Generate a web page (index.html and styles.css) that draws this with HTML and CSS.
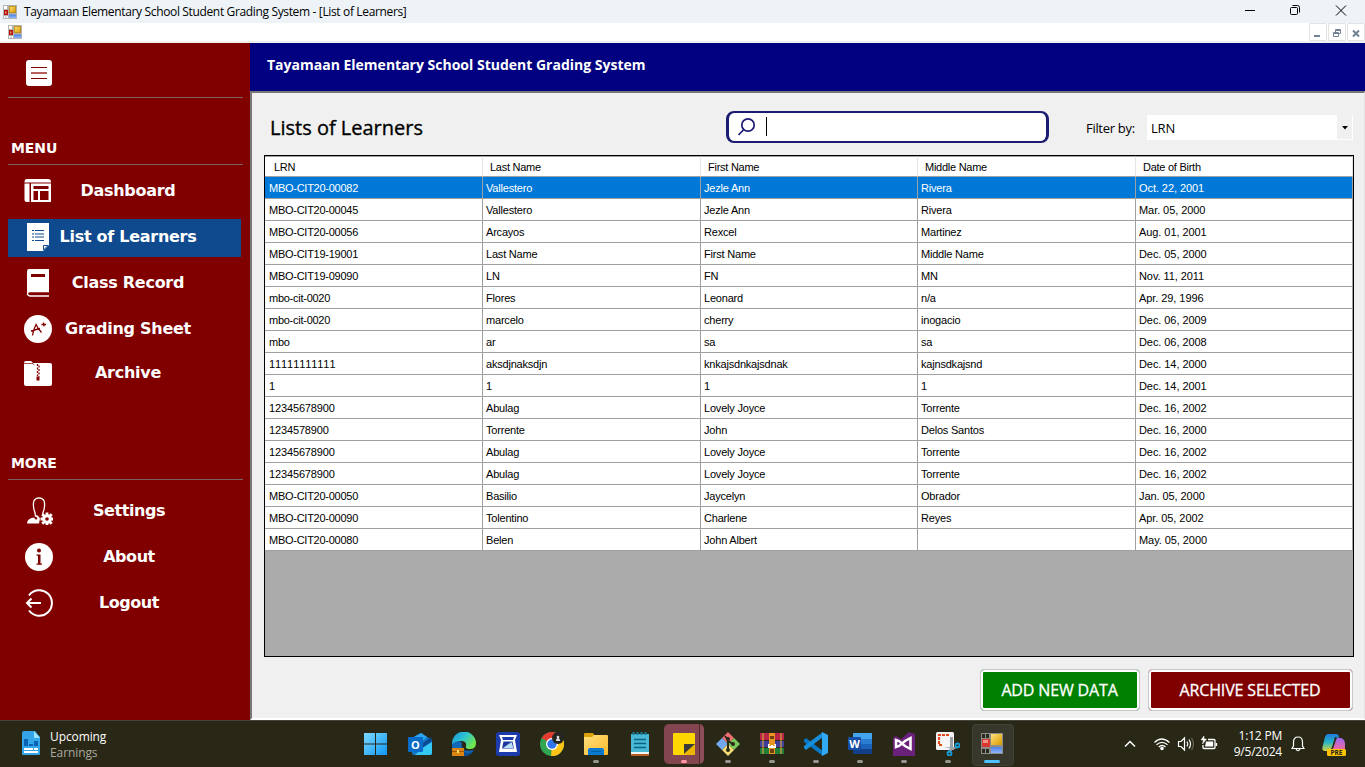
FILE: index.html
```html
<!DOCTYPE html>
<html lang="en">
<head>
<meta charset="utf-8">
<title>Tayamaan Elementary School Student Grading System</title>
<link rel="stylesheet" href="styles.css">
</head>
<body>
<svg class="defs" width="0" height="0">
  <defs>
    <linearGradient id="gold" x1="0" y1="0" x2="1" y2="1"><stop offset="0" stop-color="#ffe27a"/><stop offset="1" stop-color="#d89a00"/></linearGradient>
    <linearGradient id="blue" x1="0" y1="0" x2="0" y2="1"><stop offset="0" stop-color="#4a7ee0"/><stop offset="1" stop-color="#8fb6ff"/></linearGradient>
    <linearGradient id="win" gradientUnits="userSpaceOnUse" x1="0" y1="0" x2="24" y2="24"><stop offset="0" stop-color="#7fdcff"/><stop offset="1" stop-color="#0a93f5"/></linearGradient>
    <linearGradient id="edge" x1="0" y1="0" x2="1" y2=".6"><stop offset="0" stop-color="#1593d8"/><stop offset=".5" stop-color="#2cc3d2"/><stop offset="1" stop-color="#72e84c"/></linearGradient>
    <linearGradient id="folder" x1="0" y1="0" x2="1" y2="1"><stop offset="0" stop-color="#ffdf7c"/><stop offset="1" stop-color="#fbb92c"/></linearGradient>
    <linearGradient id="pilot" x1="0" y1="0" x2="0" y2="1"><stop offset="0" stop-color="#1f7de0"/><stop offset=".5" stop-color="#27b6c4"/><stop offset="1" stop-color="#d8d23a"/></linearGradient>
    <linearGradient id="pilot2" x1="0" y1="0" x2="0" y2="1"><stop offset="0" stop-color="#a068f0"/><stop offset="1" stop-color="#f0689a"/></linearGradient>
    <g id="form">
      <path fill="#b4b4b4" d="M0 0h14v14H0z"/><path fill="#fff" d="M1 1h3v3H1zM1 11h1.500v2H1zM3.500 11H5v2H3.500z"/>
      <path fill="#b81408" d="M1 5h4v5H1z"/><path fill="#f08a80" d="M2 6.500h1.500v2H2z"/>
      <path fill="url(#gold)" stroke="#b88200" stroke-width=".8" d="M6.400 1.400h6.200v6.200H6.400z"/><path fill="url(#blue)" d="M6 9.500h7V13H6z"/>
    </g>
  </defs>
</svg>

<header class="titlebar">
  <svg class="app-icon" width="14" height="14"><use href="#form"/></svg>
  <span class="window-title">Tayamaan Elementary School Student Grading System - [List of Learners]</span>
  <svg class="window-controls" width="120" height="23" fill="none" stroke="#000">
    <path d="M0 10.500h10M45.500 8.500a1 1 0 0 1 1-1h5a1 1 0 0 1 1 1v5a1 1 0 0 1-1 1h-5a1 1 0 0 1-1-1zM47.500 5.500h5q2 0 2 2v5M91 5.500l10 10M101 5.500l-10 10"/>
  </svg>
</header>
<div class="menustrip">
  <svg class="app-icon" width="14" height="14"><use href="#form"/></svg>
  <div class="mdi-controls">
    <span class="mdi-button"><svg width="16" height="16"><path d="M4 12h6" stroke="#718295" stroke-width="2"/></svg></span>
    <span class="mdi-button"><svg width="16" height="16" fill="none" stroke="#718295"><path d="M4.500 8.500h5v4h-5zM4 9.500h6M6.500 8V5.500h5v4H10M6 6.500h6"/></svg></span>
    <span class="mdi-button"><svg width="16" height="16" stroke="#718295" stroke-width="2"><path d="M5 6.500l6 6M11 6.500l-6 6"/></svg></span>
  </div>
</div>

<div class="workspace">
  <nav class="sidebar">
    <div class="burger"><svg width="26" height="26"><rect width="26" height="26" rx="3" fill="#fff"/><path d="M5 7.500h16M5 18.500h16" stroke="#800000"/><path d="M5 13h16" stroke="#b66060" stroke-width="2"/></svg></div>
    <h2 class="group-title">MENU</h2>
    <ul class="nav-list">
      <li class="nav-item"><svg width="28" height="28" fill="#fff"><path d="M3 2h21q3 0 3 3v.5H.5V5q0-3 2.500-3zM.5 6.500h5V25H3q-2.500 0-2.500-2.500z"/><path fill-rule="evenodd" d="M7 6.500h20V25H7zM9.500 9v3h15V9zM9.500 14v9h4.500v-9zM16 14v9h8.500v-9z"/></svg><span>Dashboard</span></li>
      <li class="nav-item active"><svg width="28" height="28"><path fill="#fff" d="M3 0h22v22l-6 6H3z"/><path d="M8 7.500h2M11 7.500h9M8 17.500h2M11 17.500h9" stroke="#104a8e"/><path d="M8 11h2M11 11h9M8 14h2M11 14h9" stroke="#5f86b4" stroke-width="1.600"/><path fill="#fff" stroke="#104a8e" d="M19.500 27v-4.500H24z"/></svg><span>List of Learners</span></li>
      <li class="nav-item"><svg width="28" height="28"><path fill="#fff" d="M5 0h20v22H6q-2 0-3 1.500V3q0-3 2-3z"/><path d="M7 6.500h14" stroke="#800000" stroke-width="3"/><path d="M25 22.500H6q-2.500 0-2.500 2t2.500 2.500h19" stroke="#fff" stroke-width="1.300" fill="none"/></svg><span>Class Record</span></li>
      <li class="nav-item"><svg width="28" height="28"><circle cx="14" cy="14" r="14" fill="#fff"/><path d="M8.500 20.500q1-6 3.500-11 2 4 5.500 8M7 16l9-2.500M17.500 9.500h4.500M19.500 7.500l.5 4" fill="none" stroke="#800000" stroke-width="1.300"/></svg><span>Grading Sheet</span></li>
      <li class="nav-item last"><svg width="28" height="28"><path fill="#fff" d="M0 4q0-2 2-2h5l2 2h17q2 0 2 2v19q0 2-2 2H2q-2 0-2-2z"/><path d="M0 4.500h9l1 1.500" stroke="#800000" fill="none" stroke-width=".7"/><path d="M13.500 5v12M15 6.500v11" stroke="#800000" stroke-dasharray="2 1.500" stroke-width="1.300"/><path d="M12.500 17.500h3v4h-3z" fill="#800000"/></svg><span>Archive</span></li>
    </ul>
    <h2 class="group-title more">MORE</h2>
    <ul class="nav-list more-list">
      <li class="nav-item"><svg width="28" height="28"><path d="M10.500 19.500q0-3-1.500-7Q6.500 1 14 .8 21.500 1 19 12.500q-1.500 4-1.500 6" fill="none" stroke="#fff" stroke-width="1.300"/><path fill="#fff" d="M2 26.500q0-5 7-6l2 2.500 1.500-2-2.500-2 2-1 2 2 1 1.500-1 5z"/><path d="M22 15.500v13M15.500 22h13M17.300 17.300l9.400 9.400M26.700 17.300l-9.400 9.400" stroke="#fff" stroke-width="2.800"/><circle cx="22" cy="22" r="4.800" fill="#fff"/><circle cx="22" cy="22" r="1.800" fill="#800000"/></svg><span>Settings</span></li>
      <li class="nav-item"><svg width="28" height="28"><circle cx="14" cy="14" r="14" fill="#fff"/><circle cx="14" cy="7.500" r="2" fill="#800000"/><path fill="#800000" d="M11.500 11.500h4V20.500H17v1.200h-5.500v-1.200H13v-7.700h-1.500z"/></svg><span>About</span></li>
      <li class="nav-item"><svg width="28" height="28" fill="none" stroke="#fff"><path d="M4 6.500A12.700 12.700 0 1 1 4 21.500" stroke-width="2"/><path d="M16 14H2M6.500 9.500L2 14l4.500 4.500" stroke-width="2"/></svg><span>Logout</span></li>
    </ul>
  </nav>

  <main class="content">
    <div class="banner">Tayamaan Elementary School Student Grading System</div>
    <section class="page">
      <div class="toolbar">
        <h1 class="page-title">Lists of Learners</h1>
        <div class="search"><svg width="40" height="28" fill="none" stroke="#1b1b72" stroke-width="1.700"><ellipse cx="19" cy="12" rx="6.200" ry="6.200"/><path d="M14.800 16.500L9.500 22"/></svg><i class="caret"></i></div>
        <label class="filter-label">Filter by:</label>
        <div class="select"><span>LRN</span><b class="drop"><svg width="15" height="24"><path d="M5 11h6l-3 3.500z"/></svg></b></div>
      </div>
      <div class="grid">
        <table>
          <colgroup><col class="wide"><col class="wide"><col class="narrow"><col class="wide"><col class="narrow"></colgroup>
          <thead><tr><th>LRN</th><th>Last Name</th><th>First Name</th><th>Middle Name</th><th>Date of Birth</th></tr></thead>
          <tbody>
            <tr class="selected"><td>MBO-CIT20-00082</td><td>Vallestero</td><td>Jezle Ann</td><td>Rivera</td><td>Oct. 22, 2001</td></tr>
            <tr><td>MBO-CIT20-00045</td><td>Vallestero</td><td>Jezle Ann</td><td>Rivera</td><td>Mar. 05, 2000</td></tr>
            <tr><td>MBO-CIT20-00056</td><td>Arcayos</td><td>Rexcel</td><td>Martinez</td><td>Aug. 01, 2001</td></tr>
            <tr><td>MBO-CIT19-19001</td><td>Last Name</td><td>First Name</td><td>Middle Name</td><td>Dec. 05, 2000</td></tr>
            <tr><td>MBO-CIT19-09090</td><td>LN</td><td>FN</td><td>MN</td><td>Nov. 11, 2011</td></tr>
            <tr><td>mbo-cit-0020</td><td>Flores</td><td>Leonard</td><td>n/a</td><td>Apr. 29, 1996</td></tr>
            <tr><td>mbo-cit-0020</td><td>marcelo</td><td>cherry</td><td>inogacio</td><td>Dec. 06, 2009</td></tr>
            <tr><td>mbo</td><td>ar</td><td>sa</td><td>sa</td><td>Dec. 06, 2008</td></tr>
            <tr><td class="ones">11111111111</td><td>aksdjnaksdjn</td><td>knkajsdnkajsdnak</td><td>kajnsdkajsnd</td><td>Dec. 14, 2000</td></tr>
            <tr><td>1</td><td>1</td><td>1</td><td>1</td><td>Dec. 14, 2001</td></tr>
            <tr><td class="number">12345678900</td><td>Abulag</td><td>Lovely Joyce</td><td>Torrente</td><td>Dec. 16, 2002</td></tr>
            <tr><td class="number">1234578900</td><td>Torrente</td><td>John</td><td>Delos Santos</td><td>Dec. 16, 2000</td></tr>
            <tr><td class="number">12345678900</td><td>Abulag</td><td>Lovely Joyce</td><td>Torrente</td><td>Dec. 16, 2002</td></tr>
            <tr><td class="number">12345678900</td><td>Abulag</td><td>Lovely Joyce</td><td>Torrente</td><td>Dec. 16, 2002</td></tr>
            <tr><td>MBO-CIT20-00050</td><td>Basilio</td><td>Jaycelyn</td><td>Obrador</td><td>Jan. 05, 2000</td></tr>
            <tr><td>MBO-CIT20-00090</td><td>Tolentino</td><td>Charlene</td><td>Reyes</td><td>Apr. 05, 2002</td></tr>
            <tr><td>MBO-CIT20-00080</td><td>Belen</td><td>John Albert</td><td></td><td>May. 05, 2000</td></tr>
          </tbody>
        </table>
      </div>
      <div class="actions">
        <button class="action add">ADD NEW DATA</button>
        <button class="action archive">ARCHIVE SELECTED</button>
      </div>
    </section>
  </main>
</div>

<footer class="taskbar">
  <div class="widget">
    <svg width="18" height="24"><path fill="#35a5ea" d="M2 0h11l5 6v17q0 1-1 1H1q-1 0-1-1V2q0-2 2-2z"/><path fill="#9be4ff" d="M12 0l6 7h-6z"/><path fill="#0b62b4" d="M2 8h4v7H2zM7 13h4v2H7zM12 10h4v5h-4z"/><path fill="#fff" d="M2 17h9v2H2zM12 17h4v2h-4zM2 20h14v2H2z"/></svg>
    <div class="widget-text"><span>Upcoming</span><span class="muted">Earnings</span></div>
  </div>
  <div class="apps">
    <div class="app"><svg width="24" height="24" fill="url(#win)"><path d="M0 1h11v10.500H0zM12 1h11v10.500H12zM0 12.500h11V23H0zM12 12.500h11V23H12z"/></svg></div>
    <div class="app"><svg width="24" height="24"><path fill="#1476c8" d="M4 6l9-5 11 7v13q0 2-2 2H6q-2 0-2-2z"/><path fill="#2ca5ef" d="M13 1l6 4-9 8-6-3V6z"/><path fill="#0a4a94" d="M23 5L10 15v4L24 9z"/><path fill="#35c8f2" d="M24 10v11q0 2-2 2H7l9-8z"/><rect y="5" width="15" height="15" rx="1" fill="#096bc8"/><text x="7.500" y="16.500" class="logo-letter">O</text></svg></div>
    <div class="app"><svg width="24" height="24"><path fill="url(#edge)" d="M0 12A12 12 0 0 1 24 11q0 6-6 6-5 0-4-3 1-5-5-5-6 0-7 8z"/><path fill="#1268ba" d="M0 12q6-5 10-1-3 10 12 7-4 6-10 6Q0 24 0 12z"/><path fill="#0c4c92" d="M10 12q-2 8 6 9 4 0 6-3-3 6-10 6z"/><path fill="#d98512" d="M0 16h12v8H0z"/><path fill="#9b520a" d="M0 19h12v1H0z"/><path fill="#ffe06a" d="M5 18h2v3H5z"/></svg></div>
    <div class="app"><svg width="24" height="24"><rect width="24" height="24" rx="3" fill="#1c3cae"/><path fill="#fff" d="M3 3h18l-2 5 2 12H3L5 8z"/><path fill="#1c3cae" d="M6 5h12l-1 3H7z"/><path fill="#18389f" d="M7.500 9.500h9l1.500 7H6z"/><path fill="#b9ddf5" d="M15.500 10l2 6H7z"/></svg></div>
    <div class="app"><svg width="24" height="24"><circle cx="12" cy="12" r="12" fill="#31a550"/><path fill="#e33b2e" d="M12 12L1.600 6A12 12 0 0 1 22.400 6z"/><path fill="#fbc416" d="M12 12L22.400 6A12 12 0 0 1 11 24z"/><circle cx="12" cy="12" r="6" fill="#fff"/><circle cx="12" cy="12" r="4.700" fill="#2f76ed"/><circle cx="18" cy="6" r="6" fill="#252522"/><circle cx="18" cy="5" r="1.300" fill="#ddd"/><path fill="#ddd" d="M16 9q0-3 2-3t2 3z"/></svg></div>
    <div class="app"><svg width="24" height="24"><path fill="#dba10b" d="M0 2q0-1 1-1h8l2 3v4H0z"/><path fill="url(#folder)" d="M0 5h8l2-2h13q1 0 1 1v18q0 1-1 1H1q-1 0-1-1z"/><path fill="#087bd0" d="M4 23v-5q0-2 2-2h12q2 0 2 2v5z"/><path fill="#065d9f" d="M7 19h10v1H7z"/></svg><i class="running"></i></div>
    <div class="app"><svg width="24" height="24"><path fill="#4ab8d5" d="M3 2h18v19H3z"/><path fill="#ecf4f5" d="M3 20h18v2H3z"/><path fill="#b45b28" d="M3 22h18v2H3z"/><path d="M6 7.500h12M6 11.500h12M6 15.500h12" stroke="#096481" stroke-width="1.600"/><path d="M5.500 0v3M9.500 0v3M13.500 0v3M17.500 0v3" stroke="#167d9e" stroke-width="2"/></svg></div>
    <div class="app stacked"><svg width="24" height="24"><path fill="#ffd700" d="M2 1h20q1 0 1 1v20q0 1-1 1H2q-1 0-1-1V2q0-1 1-1z"/><path fill="#edb500" d="M23 12v11H12z"/><path fill="#3a3a38" d="M12 12h11L12 22z"/></svg><i class="running pink"></i></div>
    <div class="app"><svg width="24" height="24"><path fill="#f07070" d="M12 0l6 6-6 6-6-6z"/><path fill="#73a7ee" d="M6 6l6 6-6 6-6-6z"/><path fill="#7bc75b" d="M18 6l6 6-6 6-6-6z"/><path fill="#f8dc73" d="M12 12l6 6-6 6-6-6z"/><path d="M9 4l3 4v10M12 9l5 3" stroke="#292918" stroke-width="2" fill="none"/><g fill="#292918"><circle cx="12" cy="7" r="2"/><circle cx="17" cy="12" r="2"/><circle cx="12" cy="18" r="2"/></g></svg><i class="running"></i></div>
    <div class="app"><svg width="24" height="24"><path fill="#b82445" d="M0 1h24v7H0z"/><path fill="#403f9e" d="M0 9h24v6H0z"/><path fill="#227d39" d="M0 16h24v6H0z"/><path d="M3 1v21M21 1v21" stroke="#d6a33f" stroke-width="1.200"/><path fill="#e89524" d="M9 1h6v21H9z"/><path fill="#71400f" d="M10 4h4v3h-4zM10 17h4v4h-4z"/><path fill="#fff" d="M8 12h1.500v2h1.500v-1h2v1h1.500v-2H16v4H8z"/></svg><i class="running"></i></div>
    <div class="app"><svg width="24" height="24"><path fill="#0877c4" d="M0 8l2-2 17 13v5L0 10z"/><path fill="#168ed9" d="M0 16l2 2L19 5V0L0 14z"/><path fill="#32a9f5" d="M18 0l6 3v18l-6 3z"/></svg><i class="running"></i></div>
    <div class="app"><svg width="24" height="24"><path fill="#43a5ee" d="M5 1h19v6H5z"/><path fill="#2b7cd3" d="M5 7h19v5H5z"/><path fill="#1b62bb" d="M5 12h19v5H5z"/><path fill="#123f88" d="M5 17h19v5H5z"/><rect y="5" width="13" height="13" rx="1" fill="#164da5"/><text x="6.500" y="15.500" class="logo-letter">W</text></svg><i class="running"></i></div>
    <div class="app"><svg width="24" height="24"><path fill="#6a217a" d="M1 6l3-2 5 3 8-7 6 2v22H1z"/><path fill="none" stroke="#fff" stroke-width="2.500" d="M18.500 6v11L13 14 7 9 4 8v7l3-1 6-5z"/></svg><i class="running"></i></div>
    <div class="app"><svg width="24" height="24"><rect width="18" height="18" rx="1.500" fill="#f6f6f6"/><path fill="none" stroke="#e04b18" stroke-width="2.200" stroke-dasharray="3 1" d="M13 3H3v10h4"/><path fill="#99a0a6" d="M14 5h3v10l5-1-1 2-5 2-2 3-2-1 2-4-6-1h6z"/><g fill="none" stroke="#159bd7" stroke-width="1.800"><circle cx="21.500" cy="13.500" r="2"/><circle cx="13.500" cy="21.500" r="2"/></g></svg><i class="running"></i></div>
    <div class="app current"><svg width="22" height="23"><path fill="#8c8c88" d="M0 1h22v21H0z"/><path fill="#2a2a20" d="M1 2h3v4H1zM5 2h3v4H5zM1 17h3v4H1zM5 17h3v4H5z"/><path fill="#d83830" d="M1 7h8v8H1z"/><path fill="#f0948c" d="M2 8h5v3H2z"/><path fill="url(#gold)" d="M10 2h11v11H10z"/><path fill="url(#blue)" d="M10 15h11v6H10z"/></svg><i class="running blue"></i></div>
  </div>
  <div class="tray">
    <svg width="100" height="24" fill="none" stroke="#fff" stroke-width="1.200">
      <path stroke-width="1.500" d="M5 14.500l5-5 5 5"/>
      <path d="M34.500 10.500q7-7 15 0M36.500 12.800q5.500-5 11 0M38.700 15q3.500-3 6.800 0"/><circle cx="42" cy="16.500" r="1.200" fill="#fff"/>
      <path d="M58.500 9.500h2.500l3.500-3.500v12L61 14.500h-2.500zM67 9.500q1.500 2.500 0 5M69 7.500q3 4.500 0 9"/><path stroke="#68685c" d="M71.500 6q4 6 0 12"/>
      <path stroke-width="1.300" d="M88 7.500h6q1 0 1 1v7q0 1-1 1H84q-1 0-1-1V13M96.500 11v3"/><path fill="#fff" stroke-width=".5" d="M84 4l-3 4h2.500l-1 4 4-5H84z"/><path fill="#fff" stroke="none" d="M86 9.500h7.200v5H85z"/>
    </svg>
    <div class="clock"><span>1:12 PM</span><span>9/5/2024</span></div>
    <svg class="bell" width="14" height="16" fill="none" stroke="#fff" stroke-width="1.200"><path d="M2.500 10V6q0-5 4.500-5t4.500 5v4l1.500 2.500H1zM5 13q2 3.500 4 0"/></svg>
    <svg class="copilot" width="24" height="24"><path fill="url(#pilot)" d="M6 1h8q3 0 3 4l-4-1-3 10-2 4H3q-4 0-2-6l2-8q1-3 3-3z"/><path fill="url(#pilot2)" d="M15 5h3q4 0 5 5v7H8q3 0 4-4l2-6z"/><rect x="5" y="16" width="19" height="7" rx="1.500" fill="#ffc400"/><text x="14.500" y="22" class="logo-pre">PRE</text></svg>
  </div>
</footer>
</body>
</html>
```
FILE: styles.css
```css
* { box-sizing: border-box; }
body { margin: 0; width: 1365px; height: 767px; overflow: hidden; display: flex; flex-direction: column; font-family: "Open Sans", sans-serif; color: #000; }
svg { display: block; flex: none; }
.defs { position: absolute; }
.titlebar { height: 23px; background: #eef3f8; display: flex; align-items: center; padding-left: 3px; }
.window-title { margin-left: 7px; font-size: 12px; line-height: 20px; letter-spacing: -0.35px; white-space: nowrap; }
.window-controls { margin-left: auto; }
.menustrip { height: 20px; background: #fff; border-bottom: 2px solid #f0f0f0; display: flex; align-items: center; padding-left: 8px; }
.mdi-controls { margin-left: auto; display: flex; gap: 1px; }
.mdi-button { width: 18px; height: 18px; border: 1px solid #e3e3e3; border-radius: 1px; }
.workspace { height: 677px; display: flex; }

.sidebar { width: 250px; background: #800000; color: #fff; font-family: "DejaVu Sans", sans-serif; font-weight: bold; }
.burger { height: 55px; margin: 0 7px 0 8px; padding: 17px 0 0 18px; border-bottom: 1px solid #7a6260; }
.group-title { margin: 40px 7px 0 8px; padding-left: 3px; height: 27px; border-bottom: 1px solid #7a6260; font-size: 14px; line-height: 21px; letter-spacing: -.1px; }
.nav-list { list-style: none; margin: 8px 9px 0 8px; padding: 0; display: flex; flex-direction: column; gap: 8px; }
.nav-item { height: 38px; display: grid; align-items: center; }
.nav-item svg { grid-area: 1 / 1; margin-left: 16px; margin-bottom: 2px; }
.nav-item span { grid-area: 1 / 1; text-align: center; padding-left: 7px; padding-bottom: 2px; font-size: 16px; letter-spacing: -.28px; line-height: 20px; }
.nav-item.active { background: #104a8e; }
.nav-item.last { margin-top: -2px; }
.group-title.more { margin-top: 60px; }
.more-list { margin-top: 13px; }
.more-list svg { margin-left: 17px; }
.more-list span { padding-left: 9px; letter-spacing: -.45px; }

.content { flex: 1; display: flex; flex-direction: column; }
.banner { height: 48px; background: #000080; color: #fff; font-size: 14px; font-weight: bold; line-height: 44px; padding-left: 17px; letter-spacing: 0; }
.page { flex: 1; background: #f0f0f0; border: solid; border-width: 2px 1px 2px 2px; border-color: #777 #e3e3e3 #fff #777; padding: 17px 10px 0 12px; }
.toolbar { display: flex; height: 45px; }
.page-title { margin: 0; padding-left: 6px; width: 462px; font-size: 20px; font-weight: 500; line-height: 35px; letter-spacing: 0; -webkit-text-stroke: .35px #000; }
.search { width: 323px; height: 32px; margin-top: 1px; border: 2px solid #1b1b72; border-width: 2px 3px; border-radius: 8px; background: #fff; display: flex; }
.caret { width: 1px; height: 19px; margin: 4px 0 0 -3px; background: #000; }
.filter-label { margin-left: 37px; font-size: 13px; line-height: 37px; width: 61px; letter-spacing: -.3px; white-space: nowrap; }
.select { width: 206px; height: 25px; margin-top: 5px; background: #fff; padding-left: 4px; display: flex; justify-content: space-between; font-size: 13px; line-height: 27px; letter-spacing: -.2px; }
.drop { width: 15px; height: 24px; background: #f0f0f0; margin-right: 1px; }
.grid { width: 1090px; height: 502px; border: 1px solid #000; background: #ababab; font-family: "Liberation Sans", sans-serif; font-size: 11px; letter-spacing: -.2px; }
table { width: 1088px; border-collapse: separate; border-spacing: 0; table-layout: fixed; }
.wide { width: 218px; }
.narrow { width: 217px; }
th, td { text-align: left; font-weight: normal; white-space: nowrap; border-right: 1px solid #a0a0a0; border-bottom: 1px solid #a0a0a0; background: #fff; line-height: 20px; }
th { height: 21px; padding: 1px 0 0 7px; line-height: 18px; border-right-color: #e5e5e5; border-top: 1px solid #a0a0a0; letter-spacing: -.26px; }
th:first-child { padding-left: 9px; }
td { height: 22px; padding: 0 0 0 3px; }
td:first-child { padding-left: 4px; letter-spacing: -.26px; }
td:last-child { letter-spacing: -.07px; }
td.number:first-child { letter-spacing: -.14px; }
td.ones:first-child { letter-spacing: -.08px; font-kerning: none; }
.selected td { background: #0078d7; color: #fff; }
.actions { display: flex; justify-content: flex-end; gap: 8px; padding: 12px 1px 0 0; }
.action { height: 42px; border: 1px solid #c8c8c8; border-radius: 4px; box-shadow: inset 0 0 0 2px #fff; color: #fff; font: 500 16px "Open Sans", sans-serif; -webkit-text-stroke: .3px #fff; padding: 0 1px 1px 0; letter-spacing: -.15px; }
.add { width: 160px; background: #008000; }
.archive { width: 205px; background: #800000; }

.taskbar { height: 47px; background: #292716; border-top: 1px solid #46443a; color: #fff; display: flex; font-size: 12px; }
.widget { width: 354px; display: flex; padding: 10px 0 0 22px; gap: 10px; }
.widget-text { display: flex; flex-direction: column; line-height: 16px; margin-top: -2px; letter-spacing: -.1px; }
.muted { color: #aaa99f; }
.apps { display: flex; }
.app { width: 44px; display: flex; flex-direction: column; align-items: center; padding-top: 11px; position: relative; }
.app > svg { position: relative; }
.running { position: absolute; left: 19px; top: 39px; width: 6px; height: 3px; border-radius: 2px; background: #96958e; }
.running.pink { background: #ff98a6; }
.running.blue { left: 14px; width: 16px; background: #4cc2ff; }
.stacked::before { content: ""; position: absolute; left: 2px; top: 3px; width: 40px; height: 40px; border-radius: 5px; background: linear-gradient(90deg, #834650 35px, #4d2b2f 35px 36px, #8f4d58 36px); }
.current::before { content: ""; position: absolute; left: 2px; top: 3px; width: 40px; height: 40px; border-radius: 4px; background: #38372b; border: 1px solid #424136; }
.tray { display: flex; margin-left: 107px; }
.tray > svg:first-child { margin-top: 11px; margin-right: 6px; margin-left: -1px; }
.clock { width: 56px; text-align: right; line-height: 16px; display: flex; flex-direction: column; padding-top: 7px; letter-spacing: -.2px; }
.bell { margin: 15px 0 0 9px; }
.copilot { margin: 12px 0 0 17px; }
.logo-letter, .logo-pre { fill: #fff; font: bold 11px "Open Sans", sans-serif; text-anchor: middle; }
.logo-pre { fill: #222; font-size: 6.500px; }
```
